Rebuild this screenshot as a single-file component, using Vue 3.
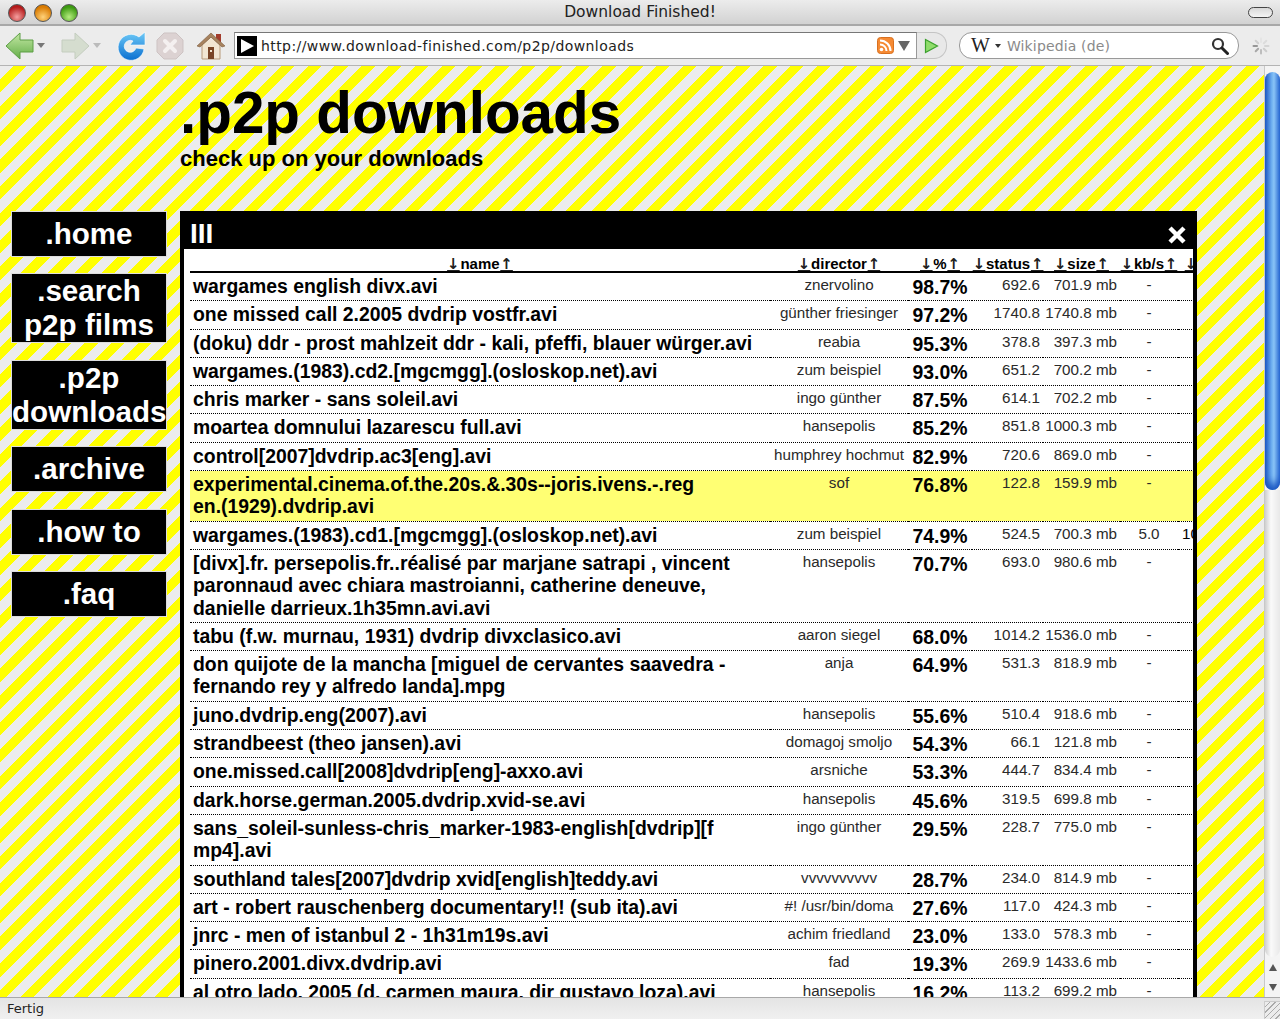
<template>
  <div class="window">
    <div class="titlebar">
      <div class="lights">
        <span class="light red"></span>
        <span class="light orange"></span>
        <span class="light green"></span>
      </div>
      <div class="title">Download Finished!</div>
      <span class="pill"></span>
    </div>

    <div class="toolbar">
      <svg class="ic back" width="30" height="30" viewBox="0 0 30 30">
        <defs>
          <linearGradient id="gb" x1="0" y1="0" x2="0" y2="1">
            <stop offset="0" stop-color="#c4e8a4" />
            <stop offset="1" stop-color="#63ad48" />
          </linearGradient>
        </defs>
        <path d="M1 15 L15 2 V9 H28 V21 H15 V28 Z" fill="url(#gb)" stroke="#5d9e45" stroke-width="1" />
      </svg>
      <span class="caret"></span>
      <svg class="ic fwd" width="30" height="30" viewBox="0 0 30 30">
        <path d="M28 15 L14 2 V9 H1 V21 H14 V28 Z" fill="#d5ddcf" stroke="#c4cdbf" stroke-width="1" />
      </svg>
      <span class="caret light-caret"></span>
      <svg class="ic reload" width="30" height="30" viewBox="0 0 30 30">
        <defs>
          <linearGradient id="gr" x1="0" y1="0" x2="0" y2="1">
            <stop offset="0" stop-color="#6fcaf7" />
            <stop offset="1" stop-color="#0a6fd0" />
          </linearGradient>
        </defs>
        <path d="M23 6 A13 13 0 1 0 28 18 L20 17 A6 6 0 1 1 17 10 L14 14 H29 V1 Z" fill="url(#gr)" stroke="#fff" stroke-width=".6" />
      </svg>
      <svg class="ic stop" width="30" height="30" viewBox="0 0 30 30">
        <path d="M9 2 H21 L28 9 V21 L21 28 H9 L2 21 V9 Z" fill="#dcd2d2" stroke="#cdc3c3" />
        <path d="M10 10 L20 20 M20 10 L10 20" stroke="#f4f0f0" stroke-width="4" stroke-linecap="round" />
      </svg>
      <svg class="ic home" width="30" height="30" viewBox="0 0 30 30">
        <rect x="20" y="3" width="5" height="8" fill="#a33c2c" />
        <path d="M6 14 V28 H24 V14 L15 6 Z" fill="#f2e6d2" stroke="#b79a78" />
        <path d="M1 15 L15 2 L29 15 L26 16 L15 6 L4 16 Z" fill="#a8835f" stroke="#7a5c40" stroke-width=".6" />
        <rect x="12" y="16" width="6" height="12" fill="#7a4526" />
        <rect x="14" y="19" width="2" height="2" fill="#f2e6d2" />
      </svg>

      <div class="urlbar">
        <svg class="favicon" width="20" height="20" viewBox="0 0 20 20">
          <rect width="20" height="20" fill="#000" />
          <path d="M4 3 L17 10 L4 17 Z" fill="#fff" />
        </svg>
        <span class="url">http://www.download-finished.com/p2p/downloads</span>
        <svg class="rss" width="17" height="17" viewBox="0 0 17 17">
          <rect x=".5" y=".5" width="16" height="16" rx="3" fill="#f58a34" stroke="#d9701f" />
          <circle cx="4.5" cy="12.5" r="1.8" fill="#fff" />
          <path d="M3 7.5 A6.5 6.5 0 0 1 9.5 14 M3 3.5 A10.5 10.5 0 0 1 13.5 14" fill="none" stroke="#fff" stroke-width="2" />
        </svg>
        <span class="url-caret"></span>
      </div>
      <div class="go">
        <svg width="15" height="16" viewBox="0 0 15 16">
          <path d="M1.5 1.5 L13.5 8 L1.5 14.5 Z" fill="#8fdc6a" stroke="#3aa02c" stroke-width="1.2" />
        </svg>
      </div>

      <div class="searchbar">
        <span class="wiki">W</span>
        <span class="wiki-caret"></span>
        <span class="engine">Wikipedia (de)</span>
        <svg class="mag" width="18" height="18" viewBox="0 0 18 18">
          <circle cx="7" cy="7" r="5" fill="#fff" stroke="#333" stroke-width="2.2" />
          <path d="M11 11 L16.5 16.5" stroke="#222" stroke-width="3" stroke-linecap="round" />
        </svg>
      </div>
      <svg class="spinner" width="18" height="18" viewBox="0 0 18 18">
        <g stroke-width="2" stroke-linecap="round">
          <path v-for="s in spokes" :key="s.a" d="M9 1.5 V5" :stroke="s.c" :transform="`rotate(${s.a} 9 9)`" />
        </g>
      </svg>
    </div>

    <div class="viewport">
      <div class="page">
        <header class="head">
          <h1>.p2p downloads</h1>
          <h2>check up on your downloads</h2>
        </header>
        <div class="content">
          <nav class="side">
            <a v-for="n in nav" :key="n" class="navbtn" :class="{ multi: n.includes('\n') }">{{ n }}</a>
          </nav>
          <section class="panel">
            <div class="panel-head">
              <span class="panel-title">III</span>
              <svg class="close" width="20" height="20" viewBox="0 0 20 20">
                <path d="M3 3 L17 17 M17 3 L3 17" stroke="#fff" stroke-width="4.4" />
              </svg>
            </div>
            <div class="panel-body">
              <table class="tbl">
                <colgroup>
                  <col v-for="c in cols" :key="c.label" :style="{ width: c.w + 'px' }" />
                </colgroup>
                <thead>
                  <tr>
                    <th v-for="c in cols" :key="c.label" :class="c.cls">
                      <span class="sort">↓</span>{{ c.label }}<span class="sort">↑</span>
                    </th>
                  </tr>
                </thead>
                <tbody>
                  <tr v-for="r in rows" :key="r[0]" :class="{ hot: r[6] }">
                    <td class="name">{{ r[0] }}</td>
                    <td class="dir">{{ r[1] }}</td>
                    <td class="pct">{{ r[2] }}%</td>
                    <td class="num">{{ r[3] }}</td>
                    <td class="num">{{ r[4] }} mb</td>
                    <td class="kb">{{ r[5] }}</td>
                    <td class="last">{{ r[7] }}</td>
                  </tr>
                </tbody>
              </table>
            </div>
          </section>
        </div>
      </div>

      <div class="scrollbar">
        <div class="thumb"></div>
        <div class="track"></div>
        <div class="arrows">
          <span class="arr up"></span>
          <span class="arr down"></span>
        </div>
      </div>
    </div>

    <div class="statusbar">
      <span>Fertig</span>
      <span class="grip"></span>
    </div>
  </div>
</template>

<script setup>
const nav = ['.home', '.search\np2p films', '.p2p\ndownloads', '.archive', '.how to', '.faq']

const cols = [
  { label: 'name', w: 580 },
  { label: 'director', w: 138 },
  { label: '%', w: 64 },
  { label: 'status', w: 71 },
  { label: 'size', w: 77 },
  { label: 'kb/s', w: 58 },
  { label: 'eta', w: 90, cls: 'left' },
]

const spokes = [0, 45, 90, 135, 180, 225, 270, 315].map((a, i) => ({
  a,
  c: ['#e4e4e4', '#dcdcdc', '#d4d4d4', '#cccccc', '#bdbdbd', '#a8a8a8', '#969696', '#cfcfcf'][i],
}))

const rows = [
  ['wargames english divx.avi', 'znervolino', '98.7', '692.6', '701.9', '-'],
  ['one missed call 2.2005 dvdrip vostfr.avi', 'günther friesinger', '97.2', '1740.8', '1740.8', '-'],
  ['(doku) ddr - prost mahlzeit ddr - kali, pfeffi, blauer würger.avi', 'reabia', '95.3', '378.8', '397.3', '-'],
  ['wargames.(1983).cd2.[mgcmgg].(osloskop.net).avi', 'zum beispiel', '93.0', '651.2', '700.2', '-'],
  ['chris marker - sans soleil.avi', 'ingo günther', '87.5', '614.1', '702.2', '-'],
  ['moartea domnului lazarescu full.avi', 'hansepolis', '85.2', '851.8', '1000.3', '-'],
  ['control[2007]dvdrip.ac3[eng].avi', 'humphrey hochmut', '82.9', '720.6', '869.0', '-'],
  ['experimental.cinema.of.the.20s.&.30s--joris.ivens.-.reg\nen.(1929).dvdrip.avi', 'sof', '76.8', '122.8', '159.9', '-', true],
  ['wargames.(1983).cd1.[mgcmgg].(osloskop.net).avi', 'zum beispiel', '74.9', '524.5', '700.3', '5.0', false, '10'],
  ['[divx].fr. persepolis.fr..réalisé par marjane satrapi , vincent\nparonnaud avec chiara mastroianni, catherine deneuve,\ndanielle darrieux.1h35mn.avi.avi', 'hansepolis', '70.7', '693.0', '980.6', '-'],
  ['tabu (f.w. murnau, 1931) dvdrip divxclasico.avi', 'aaron siegel', '68.0', '1014.2', '1536.0', '-'],
  ['don quijote de la mancha [miguel de cervantes saavedra -\nfernando rey y alfredo landa].mpg', 'anja', '64.9', '531.3', '818.9', '-'],
  ['juno.dvdrip.eng(2007).avi', 'hansepolis', '55.6', '510.4', '918.6', '-'],
  ['strandbeest (theo jansen).avi', 'domagoj smoljo', '54.3', '66.1', '121.8', '-'],
  ['one.missed.call[2008]dvdrip[eng]-axxo.avi', 'arsniche', '53.3', '444.7', '834.4', '-'],
  ['dark.horse.german.2005.dvdrip.xvid-se.avi', 'hansepolis', '45.6', '319.5', '699.8', '-'],
  ['sans_soleil-sunless-chris_marker-1983-english[dvdrip][f\nmp4].avi', 'ingo günther', '29.5', '228.7', '775.0', '-'],
  ['southland tales[2007]dvdrip xvid[english]teddy.avi', 'vvvvvvvvvv', '28.7', '234.0', '814.9', '-'],
  ['art - robert rauschenberg documentary!! (sub ita).avi', '#! /usr/bin/doma', '27.6', '117.0', '424.3', '-'],
  ['jnrc - men of istanbul 2 - 1h31m19s.avi', 'achim friedland', '23.0', '133.0', '578.3', '-'],
  ['pinero.2001.divx.dvdrip.avi', 'fad', '19.3', '269.9', '1433.6', '-'],
  ['al otro lado, 2005 (d. carmen maura, dir gustavo loza).avi', 'hansepolis', '16.2', '113.2', '699.2', '-'],
]
</script>

<style>
html, body {
  margin: 0;
  overflow: hidden;
}
</style>

<style scoped>
.window {
  width: 1280px;
  height: 1019px;
  display: flex;
  flex-direction: column;
  overflow: hidden;
  font-family: "Liberation Sans", Arial, sans-serif;
  background: #ececec;
}

.titlebar {
  height: 24px;
  flex: none;
  position: relative;
  display: flex;
  align-items: center;
  justify-content: center;
  background: linear-gradient(#ececec, #d2d2d2);
  border-bottom: 2px solid #a8a8a8;
  color: #222;
  font-family: "DejaVu Sans", sans-serif;
  font-size: 15.5px;
}
.lights {
  position: absolute;
  left: 8px;
  top: 4px;
  display: flex;
  gap: 8px;
}
.light {
  width: 18px;
  height: 18px;
  border-radius: 50%;
  border: 1px solid #555;
  box-sizing: border-box;
}
.red { background: radial-gradient(circle at 50% 75%, #f5a0a0, #b51a1a 70%); }
.orange { background: radial-gradient(circle at 50% 75%, #ffd27a, #d97a00 70%); }
.green { background: radial-gradient(circle at 50% 75%, #b6ec80, #3c9a10 70%); }
.pill {
  position: absolute;
  right: 7px;
  top: 7px;
  width: 23px;
  height: 9px;
  border: 1.5px solid #444;
  border-radius: 6px;
  background: linear-gradient(#d8d8d8, #f4f4f4);
}

.toolbar {
  height: 40px;
  flex: none;
  display: flex;
  align-items: center;
  background: #ececec;
  border-bottom: 1px solid #b4b4b4;
  position: relative;
  padding-left: 5px;
  box-sizing: border-box;
}
.ic {
  flex: none;
}
.caret {
  width: 0;
  height: 0;
  border: 4px solid transparent;
  border-top: 5px solid #777;
  border-bottom: 0;
  margin: 0 16px 0 2px;
}
.light-caret {
  border-top-color: #bbb;
  margin: 0 15px 0 2px;
}
.stop {
  margin-left: 9px;
}
.home {
  margin-left: 11px;
}
.urlbar {
  margin-left: 8px;
  width: 683px;
  height: 27px;
  box-sizing: border-box;
  border: 1px solid #999;
  border-top-color: #777;
  background: #fff;
  display: flex;
  align-items: center;
  padding-left: 2px;
  flex: none;
}
.favicon {
  flex: none;
}
.url {
  margin-left: 4px;
  font-family: "DejaVu Sans", sans-serif;
  font-size: 14px;
  letter-spacing: .42px;
  color: #222;
  white-space: nowrap;
}
.rss {
  margin-left: auto;
  margin-right: 4px;
}
.url-caret {
  width: 0;
  height: 0;
  border: 6px solid transparent;
  border-top: 10px solid #666;
  border-bottom: 0;
  margin-right: 6px;
}
.go {
  width: 30px;
  height: 27px;
  box-sizing: border-box;
  border: 1px solid #c4c4c4;
  border-left: 0;
  border-radius: 0 13px 13px 0;
  background: #e8e8e8;
  display: flex;
  align-items: center;
  padding-left: 7px;
  flex: none;
}
.searchbar {
  margin-left: 12px;
  width: 280px;
  height: 27px;
  box-sizing: border-box;
  border: 1px solid #999;
  border-radius: 13px;
  background: #fff;
  display: flex;
  align-items: center;
  padding: 0 9px 0 11px;
  flex: none;
}
.wiki {
  font-family: "Liberation Serif", serif;
  font-size: 20px;
  color: #222;
}
.wiki-caret {
  width: 0;
  height: 0;
  border: 3px solid transparent;
  border-top: 4px solid #333;
  border-bottom: 0;
  margin: 0 6px 0 5px;
}
.engine {
  font-family: "DejaVu Sans", sans-serif;
  font-size: 14px;
  letter-spacing: .15px;
  color: #8a8a8a;
}
.mag {
  margin-left: auto;
}
.spinner {
  margin-left: 13px;
}

.viewport {
  flex: 1;
  min-height: 0;
  display: flex;
}
.page {
  flex: 1;
  min-width: 0;
  overflow: hidden;
  background: repeating-linear-gradient(135deg, #ececec 0, #ececec 9.475px, #ffff00 9.475px, #ffff00 18.95px);
}
.head {
  margin-left: 180px;
  padding-top: 15px;
  height: 130px;
  box-sizing: border-box;
  color: #000;
}
h1 {
  margin: 0;
  font-size: 58.4px;
  line-height: 64px;
  font-weight: bold;
}
h2 {
  margin: 0;
  font-size: 22px;
  line-height: 27px;
  font-weight: bold;
}
.content {
  margin-top: 15px;
  display: flex;
  align-items: flex-start;
  padding-left: 11px;
  gap: 13px;
}
.side {
  width: 156px;
  flex: none;
  display: flex;
  flex-direction: column;
  gap: 16.4px;
}
.navbtn {
  display: block;
  background: #000;
  color: #fff;
  border: 1px solid #ddd;
  box-sizing: border-box;
  padding: 5px 0;
  text-align: center;
  font-size: 29.6px;
  line-height: 34px;
  font-weight: bold;
  white-space: pre-line;
}
.navbtn.multi {
  padding: 0;
}
.panel {
  width: 1017px;
  flex: none;
  background: #000;
  padding: 0 4px;
  box-sizing: border-box;
}
.panel-head {
  height: 38px;
  display: flex;
  align-items: center;
  justify-content: space-between;
  color: #fff;
}
.panel-title {
  font-size: 28px;
  font-weight: bold;
  margin-left: 6px;
  padding-top: 8px;
}
.close {
  margin: 9px 6px 0 0;
}
.panel-body {
  background: #fff;
  overflow: hidden;
  padding: 6px 0 0 6px;
}
.tbl {
  width: 1078px;
  table-layout: fixed;
  border-collapse: collapse;
  color: #000;
}
th {
  font-size: 15px;
  line-height: 14px;
  font-weight: bold;
  padding: 2px 0 0;
  text-align: center;
  border-bottom: 2px solid #000;
  white-space: nowrap;
}
th.left {
  text-align: left;
  padding-left: 6px;
}
.sort {
  display: inline-block;
  width: 14px;
  font-family: "DejaVu Sans", sans-serif;
  font-size: 15px;
  font-weight: bold;
  text-decoration: underline;
  text-align: center;
  color: #222;
}
td {
  padding: 2px 3px 3px;
  vertical-align: top;
  border-bottom: 1px dotted #000;
  white-space: pre-line;
}
tr.hot td {
  background: #ffff73;
}
.name {
  font-size: 19.4px;
  line-height: 22.3px;
  font-weight: bold;
}
.dir {
  font-size: 15.2px;
  line-height: 18px;
  text-align: center;
  color: #2a2a2a;
  padding: 3px 0 0;
}
.pct {
  font-size: 19.4px;
  line-height: 22.3px;
  font-weight: bold;
  text-align: center;
  padding: 3px 0 2px;
}
.num {
  font-size: 15.2px;
  line-height: 18px;
  text-align: right;
  color: #2a2a2a;
  padding: 3px 3px 0 0;
  white-space: nowrap;
}
.kb {
  font-size: 15.2px;
  line-height: 18px;
  text-align: center;
  color: #2a2a2a;
  padding-top: 3px;
}
.last {
  font-size: 15.2px;
  line-height: 18px;
  padding: 3px 0 0 4px;
}

.scrollbar {
  width: 16px;
  flex: none;
  display: flex;
  flex-direction: column;
  background: #f4f4f4;
  border-left: 1px solid #c8c8c8;
  box-sizing: border-box;
}
.thumb {
  margin-top: 6px;
  height: 418px;
  flex: none;
  border-radius: 8px;
  background: linear-gradient(90deg, #1d58c4, #6fb0f0 45%, #8ac4f6 60%, #2a6ad4);
  box-shadow: inset 0 -10px 8px -4px #1a55c0;
}
.track {
  flex: 1;
  border-radius: 0 0 8px 8px;
  background: linear-gradient(90deg, #cfcfcf, #fafafa 40%, #e8e8e8);
}
.arrows {
  height: 40px;
  flex: none;
  display: flex;
  flex-direction: column;
  align-items: center;
  justify-content: space-around;
  background: #f4f4f4;
}
.arr {
  width: 0;
  height: 0;
  border: 4px solid transparent;
}
.up {
  border-top: 0;
  border-bottom: 7px solid #555;
}
.down {
  border-bottom: 0;
  border-top: 7px solid #555;
}

.statusbar {
  height: 22px;
  flex: none;
  display: flex;
  align-items: center;
  justify-content: space-between;
  background: linear-gradient(#e4e4e4, #f0f0f0);
  border-top: 1px solid #a8a8a8;
  box-sizing: border-box;
  padding-left: 7px;
  font-family: "DejaVu Sans", sans-serif;
  font-size: 13px;
  color: #222;
}
.grip {
  width: 15px;
  height: 17px;
  align-self: flex-end;
  border-left: 1px solid #ccc;
  border-top: 1px solid #ccc;
  background: repeating-linear-gradient(135deg, #ececec 0, #ececec 3px, #aaa 3px, #aaa 4px);
}
</style>
